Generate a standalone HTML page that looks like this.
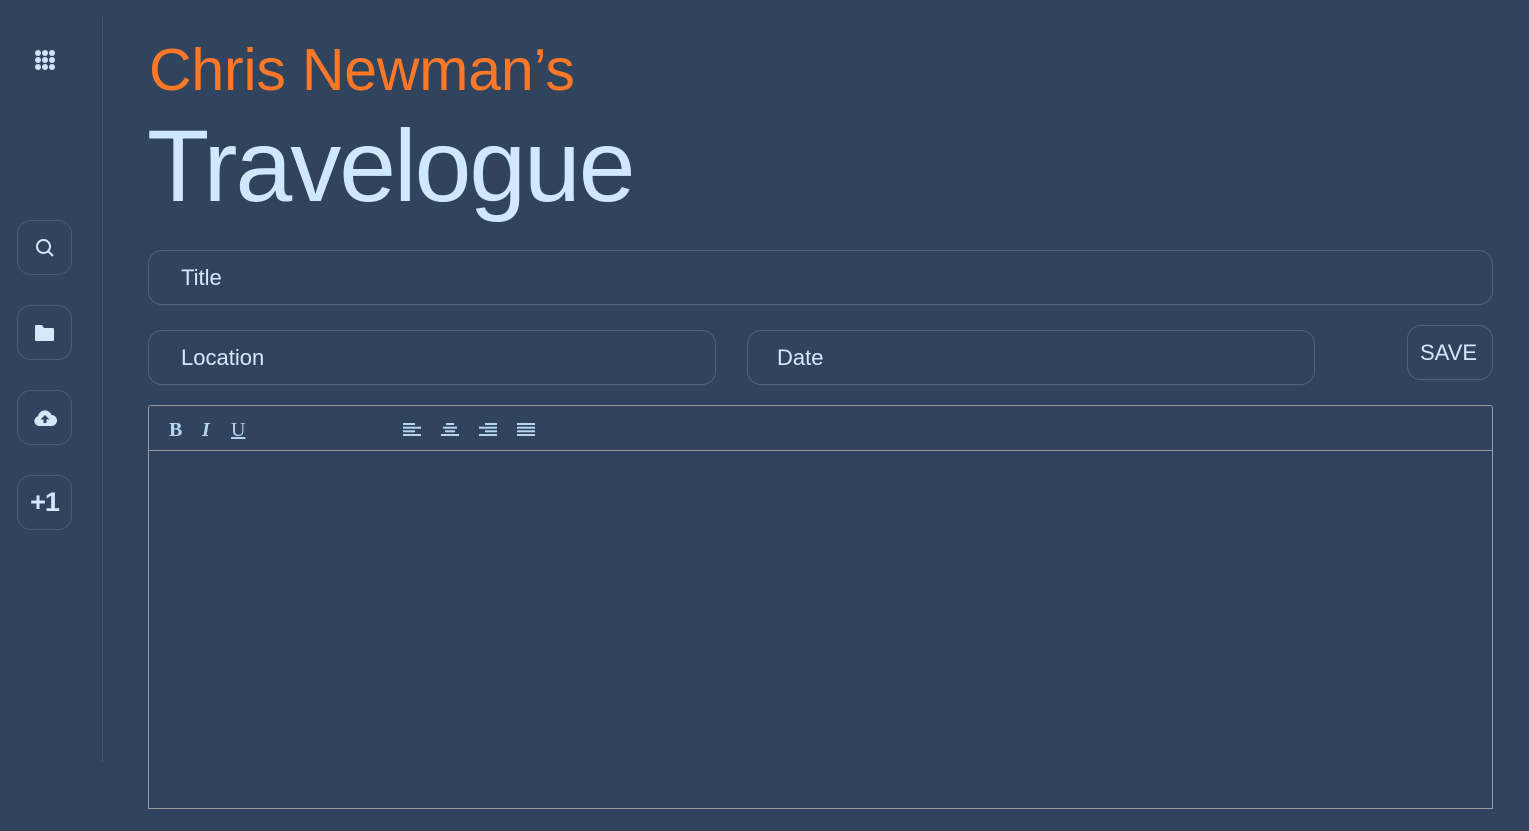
<!DOCTYPE html>
<html><head><meta charset="utf-8">
<style>
*{box-sizing:border-box;margin:0;padding:0}
html,body{width:1529px;height:831px;background:#31445d;overflow:hidden;font-family:"Liberation Sans",sans-serif}
.side{position:absolute;left:102px;top:16px;width:1px;height:745px;border-left:1px dotted #4f6481}
.btn{position:absolute;left:17px;width:55px;height:55px;border:1px solid #4a5d78;border-radius:14px;display:flex;align-items:center;justify-content:center;color:#d4e8fb}
.f{position:absolute;border:1px solid #4f6380;border-radius:14px;height:55px;color:#d4e8fb;font-size:22px;padding-left:32px;display:flex;align-items:center}
h1{position:absolute;left:149px;top:36px;font-weight:400;font-size:59px;color:#ff7727;letter-spacing:-0.2px}
h2{position:absolute;left:147px;top:108px;font-weight:400;font-size:102px;color:#cfe7ff;letter-spacing:-2px}
.ed{position:absolute;left:148px;top:405px;width:1345px;height:404px;border:1px solid #9a9a9a;border-radius:3px 3px 0 0}
.tb{height:45px;border-bottom:1px solid #9a9a9a;position:relative;color:#b5d5f0;font-family:"Liberation Serif",serif;font-size:20px;font-weight:bold}
.tb span{position:absolute;top:13px}
.al{position:absolute;top:17px}
</style></head><body>
<svg style="position:absolute;left:35px;top:50px" width="20" height="20" viewBox="0 0 20 20" fill="#cfe3f8"><circle cx="3" cy="3" r="3"/><circle cx="10" cy="3" r="3"/><circle cx="17" cy="3" r="3"/><circle cx="3" cy="10" r="3"/><circle cx="10" cy="10" r="3"/><circle cx="17" cy="10" r="3"/><circle cx="3" cy="17" r="3"/><circle cx="10" cy="17" r="3"/><circle cx="17" cy="17" r="3"/></svg>
<div class="side"></div>
<div class="btn" style="top:220px"><svg width="20" height="20" viewBox="0 0 20 20" fill="none" stroke="#d4e8fb" stroke-width="2"><circle cx="8.5" cy="8.5" r="6.5"/><path d="M13.5 13.5L18 18"/></svg></div>
<div class="btn" style="top:305px"><svg width="21" height="18" viewBox="0 0 21 18" fill="#d4e8fb"><path d="M1 2Q1 1 2 1H8L10 4H19Q20 4 20 5V16Q20 17 19 17H2Q1 17 1 16Z"/></svg></div>
<div class="btn" style="top:390px"><svg width="24" height="18" viewBox="0 0 24 18"><path fill="#d4e8fb" d="M6 17A5 5 0 0 1 5 7.2A7 7 0 0 1 18.5 6A5.5 5.5 0 0 1 18.5 17Z"/><path fill="#31445d" d="M12 6L16.5 10.5H13.5V14H10.5V10.5H7.5Z"/></svg></div>
<div class="btn" style="top:475px;font-size:27px;font-weight:bold;letter-spacing:-1px">+1</div>
<h1>Chris Newman’s</h1>
<h2>Travelogue</h2>
<div class="f" style="left:148px;top:250px;width:1345px">Title</div>
<div class="f" style="left:148px;top:330px;width:568px">Location</div>
<div class="f" style="left:747px;top:330px;width:568px;padding-left:29px">Date</div>
<div class="f" style="left:1407px;top:325px;width:86px;padding-left:12px;font-size:22px">SAVE</div>
<div class="ed"><div class="tb">
<span style="left:20px">B</span><span style="left:53px;font-style:italic">I</span><span style="left:82px;text-decoration:underline;font-weight:normal">U</span>
<svg class="al" style="left:254px" width="18" height="13" fill="#b5d5f0"><rect y="0" width="12" height="2"/><rect y="3.7" width="18" height="2"/><rect y="7.3" width="12" height="2"/><rect y="11" width="18" height="2"/></svg>
<svg class="al" style="left:292px" width="18" height="13" fill="#b5d5f0"><rect x="5" y="0" width="8" height="2"/><rect x="2" y="3.7" width="14" height="2"/><rect x="4" y="7.3" width="10" height="2"/><rect y="11" width="18" height="2"/></svg>
<svg class="al" style="left:330px" width="18" height="13" fill="#b5d5f0"><rect x="6" y="0" width="12" height="2"/><rect y="3.7" width="18" height="2"/><rect x="6" y="7.3" width="12" height="2"/><rect y="11" width="18" height="2"/></svg>
<svg class="al" style="left:368px" width="18" height="13" fill="#b5d5f0"><rect y="0" width="18" height="2"/><rect y="3.7" width="18" height="2"/><rect y="7.3" width="18" height="2"/><rect y="11" width="18" height="2"/></svg>
</div></div>
</body></html>
